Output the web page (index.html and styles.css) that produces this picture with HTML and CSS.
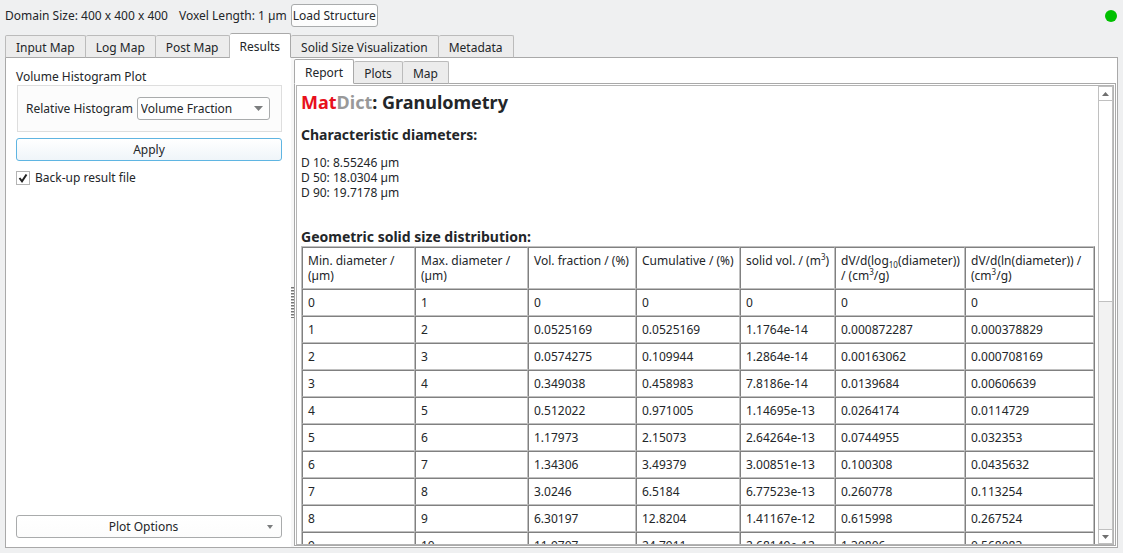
FILE: index.html
```html
<!DOCTYPE html>
<html lang="en">
<head>
<meta charset="utf-8">
<title>MatDict: Granulometry</title>
<link rel="stylesheet" href="styles.css">
</head>
<body>
<header class="topbar">
  <span class="domain">Domain Size: 400 x 400 x 400</span>
  <span class="voxel">Voxel Length: 1 µm</span>
  <button class="btn load" type="button">Load Structure</button>
  <span class="status"></span>
</header>
<nav class="tabs main-tabs">
  <button class="tab" type="button">Input Map</button>
  <button class="tab" type="button">Log Map</button>
  <button class="tab" type="button">Post Map</button>
  <button class="tab active" type="button">Results</button>
  <button class="tab" type="button">Solid Size Visualization</button>
  <button class="tab" type="button">Metadata</button>
</nav>
<main class="panel">
  <section class="side">
    <h2 class="group-title">Volume Histogram Plot</h2>
    <div class="group">
      <label for="hist">Relative Histogram</label>
      <span class="select-wrap">
        <select id="hist" class="select"><option>Volume Fraction</option></select>
        <svg class="arrow" viewBox="0 0 9 5"><path d="M0 0h9L4.500 5z"/></svg>
      </span>
    </div>
    <button class="btn apply" type="button">Apply</button>
    <label class="check"><input type="checkbox" checked>Back-up result file</label>
    <button class="btn options" type="button">Plot Options<svg class="arrow small" viewBox="0 0 6 4"><path d="M0 0h6L3 4z"/></svg></button>
  </section>
  <div class="splitter"><span class="grip"></span></div>
  <section class="result">
    <nav class="tabs sub-tabs">
      <button class="tab active" type="button">Report</button>
      <button class="tab" type="button">Plots</button>
      <button class="tab" type="button">Map</button>
    </nav>
    <div class="frame">
      <div class="view">
        <article class="report">
          <h1 class="title"><span class="mat">Mat</span><span class="dict">Dict</span>: Granulometry</h1>
          <h2 class="heading">Characteristic diameters:</h2>
          <p class="diameters">D 10: 8.55246 µm<br>D 50: 18.0304 µm<br>D 90: 19.7178 µm</p>
          <h2 class="heading">Geometric solid size distribution:</h2>
          <table class="data">
            <colgroup><col class="c-wide"><col class="c-wide"><col class="c-frac"><col class="c-cum"><col class="c-vol"><col class="c-log"><col class="c-ln"></colgroup>
            <thead>
              <tr><th>Min. diameter / (µm)</th><th>Max. diameter / (µm)</th><th>Vol. fraction / (%)</th><th>Cumulative / (%)</th><th>solid vol. / (m<sup>3</sup>)</th><th>dV/d(log<sub>10</sub>(diameter))<br>/ (cm<sup>3</sup>/g)</th><th>dV/d(ln(diameter)) /<br>(cm<sup>3</sup>/g)</th></tr>
            </thead>
            <tbody>
              <tr><td>0</td><td>1</td><td>0</td><td>0</td><td>0</td><td>0</td><td>0</td></tr>
              <tr><td>1</td><td>2</td><td>0.0525169</td><td>0.0525169</td><td>1.1764e-14</td><td>0.000872287</td><td>0.000378829</td></tr>
              <tr><td>2</td><td>3</td><td>0.0574275</td><td>0.109944</td><td>1.2864e-14</td><td>0.00163062</td><td>0.000708169</td></tr>
              <tr><td>3</td><td>4</td><td>0.349038</td><td>0.458983</td><td>7.8186e-14</td><td>0.0139684</td><td>0.00606639</td></tr>
              <tr><td>4</td><td>5</td><td>0.512022</td><td>0.971005</td><td>1.14695e-13</td><td>0.0264174</td><td>0.0114729</td></tr>
              <tr><td>5</td><td>6</td><td>1.17973</td><td>2.15073</td><td>2.64264e-13</td><td>0.0744955</td><td>0.032353</td></tr>
              <tr><td>6</td><td>7</td><td>1.34306</td><td>3.49379</td><td>3.00851e-13</td><td>0.100308</td><td>0.0435632</td></tr>
              <tr><td>7</td><td>8</td><td>3.0246</td><td>6.5184</td><td>6.77523e-13</td><td>0.260778</td><td>0.113254</td></tr>
              <tr><td>8</td><td>9</td><td>6.30197</td><td>12.8204</td><td>1.41167e-12</td><td>0.615998</td><td>0.267524</td></tr>
              <tr><td>9</td><td>10</td><td>11.9707</td><td>24.7911</td><td>2.68149e-12</td><td>1.30806</td><td>0.568083</td></tr>
            </tbody>
          </table>
        </article>
        <div class="scrollbar">
          <button class="step" type="button" aria-label="Scroll up"><svg class="tri" viewBox="0 0 7 4"><path d="M0 4h7L3.500 0z"/></svg></button>
          <span class="thumb"></span>
          <span class="track"></span>
          <button class="step" type="button" aria-label="Scroll down"><svg class="tri" viewBox="0 0 7 4"><path d="M0 0h7L3.500 4z"/></svg></button>
        </div>
      </div>
    </div>
  </section>
</main>
</body>
</html>
```
FILE: styles.css
```css
* { box-sizing: border-box; }

body {
  margin: 0;
  height: 100vh;
  padding: 0 5px 5px;
  display: flex;
  flex-direction: column;
  overflow: hidden;
  background: #eff0f1;
  color: #232629;
  font: 12px/15px "Noto Sans", "Open Sans", sans-serif;
}

button, select, input { font: inherit; color: inherit; margin: 0; }

.topbar { display: flex; align-items: center; height: 31px; flex: none; }
.voxel { margin-left: 11px; }
.status { width: 12px; height: 12px; border-radius: 50%; background: #00c000; margin-left: auto; margin-right: 1px; }

.btn {
  border: 1px solid #a9abac;
  border-radius: 3px;
  background: linear-gradient(#fff, #fcfcfc);
  height: 23px;
  padding: 0 1px;
}
.load { margin-left: 4px; }

.tabs { display: flex; align-items: flex-end; flex: none; position: relative; z-index: 1; margin-bottom: -1px; }
.tab {
  height: 23px;
  padding: 2px 10px 0;
  border: 1px solid #bbb;
  border-bottom-color: #a9a9a9;
  border-left-width: 0;
  border-radius: 2px 2px 0 0;
  background: #ececec;
  white-space: nowrap;
}
.tab:first-child { border-left-width: 1px; }
.tab.active { height: 25px; background: #fff; border-color: #a9a9a9; border-bottom-color: #fff; }
.main-tabs { height: 27px; }

.panel { flex: 1; min-height: 0; display: flex; border: 1px solid #a9a9a9; background: #fff; padding-right: 1px; }

.side { width: 285px; flex: none; display: flex; flex-direction: column; padding: 11px 9px 9px 10px; }
.group-title { margin: 0 0 1px; font-size: 12px; font-weight: 400; line-height: 15px; }
.group {
  display: flex;
  align-items: center;
  gap: 4px;
  height: 47px;
  margin-left: 1px;
  padding: 0 11px 0 8px;
  border: 1px solid #dedede;
  background: #fcfcfc;
  white-space: nowrap;
}
.select-wrap { position: relative; flex: 1; }
.select {
  display: block;
  width: 100%;
  height: 23px;
  padding: 0 3px;
  appearance: none;
  border: 1px solid #a9abac;
  border-radius: 3px;
  background: #fefefe;
}
.arrow { position: absolute; right: 7px; top: 9px; width: 9px; height: 5px; fill: #7b7d7e; }
.apply { margin-top: 6px; border-color: #5fb5e2; background: linear-gradient(#fff, #eff5f9); }
.check { display: flex; align-items: center; margin-top: 9px; }
.check input {
  appearance: none;
  width: 14px;
  height: 14px;
  margin-right: 5px;
  border: 1px solid #b4b4b4;
  background: #fff url("data:image/svg+xml,%3Csvg xmlns='http://www.w3.org/2000/svg' viewBox='0 0 12 12'%3E%3Cpath d='M2.500 6L5 9.300L9.500 2.500' fill='none' stroke='%23222' stroke-width='2'/%3E%3C/svg%3E");
}
.options { position: relative; margin-top: auto; padding-right: 12px; }
.arrow.small { right: 8px; width: 6px; height: 4px; }

.splitter { width: 3px; flex: none; display: flex; align-items: center; background: #f7f7f7; }
.grip { width: 3px; height: 31px; background: repeating-linear-gradient(#777 0 1px, #bbb 1px 2px, #fff 2px 3px); }

.result { flex: 1; min-width: 0; display: flex; flex-direction: column; padding: 1px 0; }
.frame { flex: 1; min-height: 0; border: 1px solid #a9a9a9; padding: 1px 1px 0; display: flex; }
.view { flex: 1; min-width: 0; border: 1px solid #b4b4b4; display: flex; overflow: hidden; }
.report { flex: 1; min-width: 0; padding: 4px 3px 0 4px; overflow: hidden; }
.title { margin: 0; font-size: 18px; line-height: 24px; }
.mat { color: #e8101c; }
.dict { color: #999; }
.heading { margin: 0; font-size: 14px; line-height: 18px; }
.title + .heading { margin-top: 12px; }
.diameters { margin: 11px 0 28px; }

.data {
  width: 100%;
  table-layout: fixed;
  border-spacing: 0;
  border: 1px solid;
  border-color: #c0c0c0 #808080 #808080 #c0c0c0;
}
.data th, .data td {
  padding: 5px 0 5px 5px;
  border: 1px solid;
  border-color: #808080 #c0c0c0 #c0c0c0 #808080;
  font-weight: 400;
  text-align: left;
  vertical-align: top;
  white-space: nowrap;
}
.data th:nth-child(-n+2) { white-space: normal; }
.data sup, .data sub { font-size: 8px; line-height: 0; }
.c-wide { width: 113px; }
.c-frac { width: 108px; }
.c-cum { width: 104px; }
.c-vol { width: 95px; }
.c-log { width: 130px; }

.scrollbar { width: 15px; flex: none; display: flex; flex-direction: column; border: 1px solid #c0c0c0; background: #f2f2f2; }
.step { height: 13px; flex: none; padding: 0; border: 0; background: #fff; display: flex; align-items: center; justify-content: center; }
.tri { width: 7px; height: 4px; fill: #6f6f6f; }
.thumb { flex: 201; border: solid #c0c0c0; border-width: 1px 0; background: #fff; }
.track { flex: 229; border-bottom: 1px solid #c0c0c0; }
```
